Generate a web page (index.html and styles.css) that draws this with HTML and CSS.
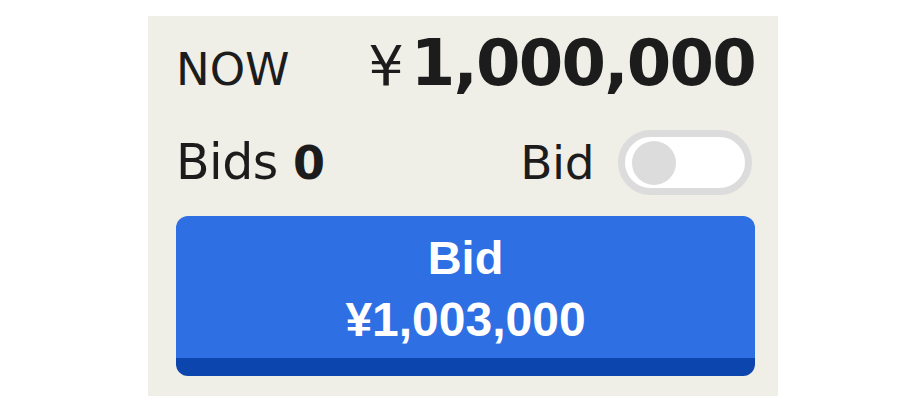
FILE: index.html
```html
<!DOCTYPE html>
<html lang="ja">
<head>
<meta charset="utf-8">
<title>Bid</title>
<link rel="stylesheet" href="styles.css">
</head>
<body>
<div class="panel">
  <div class="row-price">
    <span class="now">NOW</span>
    <span class="price"><span class="yen">¥</span><span class="amount">1,000,000</span></span>
  </div>
  <div class="row-bids">
    <span class="bids">Bids <b class="count">0</b></span>
    <label class="auto">
      <span class="auto-label">Bid</span>
      <span class="toggle"><span class="knob"></span></span>
    </label>
  </div>
  <button class="bid-btn" type="button">
    <span class="btn-line1">Bid</span>
    <span class="btn-line2">¥1,003,000</span>
  </button>
</div>
</body>
</html>
```
FILE: styles.css
```css
html, body {
  margin: 0;
  padding: 0;
  background: #ffffff;
}

body {
  font-family: "DejaVu Sans", sans-serif;
  color: #1c1c1c;
}

.panel {
  box-sizing: border-box;
  width: 630px;
  height: 380px;
  margin: 16px 0 0 148px;
  padding: 16px 23px 20px 28px;
  background: #efeee7;
  display: flex;
  flex-direction: column;
}

.row-price {
  display: flex;
  justify-content: space-between;
  align-items: baseline;
  height: 62px;
  line-height: 62px;
}

.now {
  font-size: 45px;
  font-weight: normal;
}

.price {
  display: flex;
  align-items: baseline;
  gap: 7px;
}

.yen {
  font-size: 56px;
  font-weight: normal;
}

.amount {
  font-size: 64px;
  font-weight: bold;
  letter-spacing: -1.8px;
}

.row-bids {
  display: flex;
  justify-content: space-between;
  align-items: center;
  height: 65px;
  margin-top: 36px;
  font-size: 49px;
}

.bids {
  letter-spacing: -0.5px;
}

.count {
  font-weight: bold;
  font-size: 46px;
}

.auto {
  display: flex;
  align-items: center;
  gap: 24px;
}

.auto-label {
  font-size: 47px;
  letter-spacing: -0.5px;
}

.toggle {
  box-sizing: border-box;
  width: 134px;
  height: 65px;
  border: 7px solid #dcdcdc;
  border-radius: 33px;
  background: #ffffff;
  display: flex;
  align-items: center;
  padding-left: 7px;
  margin-right: 3px;
}

.knob {
  width: 44px;
  height: 44px;
  border-radius: 50%;
  background: #dcdcdc;
}

.bid-btn {
  box-sizing: border-box;
  margin-top: 21px;
  height: 160px;
  width: 100%;
  border: 0;
  border-bottom: 18px solid #0c45ad;
  border-radius: 12px;
  background: #2e6fe3;
  color: #ffffff;
  font-family: "Liberation Sans", Arial, sans-serif;
  font-weight: bold;
  padding: 11px 0 7px;
  display: flex;
  flex-direction: column;
  align-items: center;
  cursor: pointer;
}

.btn-line1 {
  font-size: 47px;
  line-height: 62px;
}

.btn-line2 {
  font-size: 48px;
  line-height: 62px;
}
```
